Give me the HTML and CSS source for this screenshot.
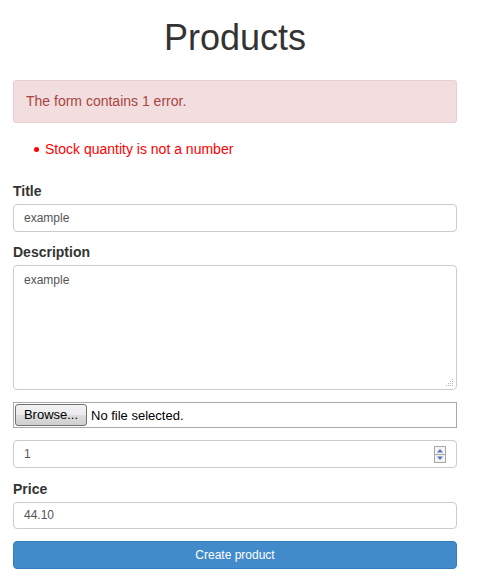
FILE: index.html
```html
<!DOCTYPE html>
<html>
<head>
<meta charset="utf-8">
<link rel="stylesheet" href="styles.css">
</head>
<body>
<div class="container">
  <h1 class="page-title">Products</h1>
  <div class="alert">The form contains 1 error.</div>
  <ul class="errors">
    <li>Stock quantity is not a number</li>
  </ul>
  <form class="form">
    <div class="group group-tight">
      <label class="label">Title</label>
      <div class="input">example</div>
    </div>
    <div class="group">
      <label class="label">Description</label>
      <div class="input textarea">example
        <svg class="grip" width="8" height="8" viewBox="0 0 8 8"><g fill="#b8b8b8"><rect x="6" y="0" width="1" height="1"/><rect x="4" y="2" width="1" height="1"/><rect x="6" y="2" width="1" height="1"/><rect x="2" y="4" width="1" height="1"/><rect x="4" y="4" width="1" height="1"/><rect x="6" y="4" width="1" height="1"/><rect x="0" y="6" width="1" height="1"/><rect x="2" y="6" width="1" height="1"/><rect x="4" y="6" width="1" height="1"/><rect x="6" y="6" width="1" height="1"/></g></svg>
      </div>
    </div>
    <div class="group">
      <div class="file">
        <span class="browse">Browse...</span>
        <span class="file-text">No file selected.</span>
      </div>
    </div>
    <div class="group">
      <div class="input number">
        <span>1</span>
        <svg class="spin" width="12" height="17" viewBox="0 0 12 17">
          <rect x="0.5" y="0.5" width="11" height="16" fill="#f4f4f4" stroke="#a8a8a8"/>
          <line x1="1" y1="8.5" x2="11" y2="8.5" stroke="#a8a8a8"/>
          <polygon points="3,6.5 9,6.5 6,3" fill="#5a6ec0"/>
          <polygon points="3,10.5 9,10.5 6,14" fill="#5a6ec0"/>
        </svg>
      </div>
    </div>
    <div class="group">
      <label class="label">Price</label>
      <div class="input input-short">44.10</div>
    </div>
    <div class="group">
      <div class="btn">Create product</div>
    </div>
  </form>
</div>
</body>
</html>
```

FILE: styles.css
```css
html, body {
  margin: 0;
  padding: 0;
  background: #fff;
}
body {
  font-family: "Liberation Sans", Arial, sans-serif;
  color: #333;
  font-size: 14px;
}
.container {
  width: 444px;
  margin-left: 13px;
}
.page-title {
  margin: 0;
  padding-top: 18px;
  height: 80px;
  box-sizing: border-box;
  text-align: center;
  font-size: 36px;
  font-weight: normal;
  line-height: 40px;
  color: #333;
}
.alert {
  height: 43px;
  box-sizing: border-box;
  background: #f2dede;
  border: 1px solid #ebccd1;
  border-radius: 3px;
  color: #a94442;
  padding: 10px 12px;
  line-height: 20px;
}
.errors {
  margin: 0;
  padding: 16px 0 0 32px;
  height: 59px;
  box-sizing: border-box;
  color: #ff0000;
  line-height: 20px;
  list-style: none;
}
.errors li {
  position: relative;
}
.errors li::before {
  content: "";
  position: absolute;
  left: -11px;
  top: 8px;
  width: 5px;
  height: 5px;
  border-radius: 50%;
  background: #ff0000;
}
.form {
  display: flex;
  flex-direction: column;
}
.group {
  display: flex;
  flex-direction: column;
  margin-bottom: 12px;
}
.group-tight {
  margin-bottom: 11px;
}
.label {
  font-weight: bold;
  line-height: 18px;
  margin-bottom: 4px;
  color: #333;
}
.input {
  height: 28px;
  box-sizing: border-box;
  border: 1px solid #ccc;
  border-radius: 4px;
  padding: 0 10px;
  font-size: 12px;
  line-height: 26px;
  color: #555;
  background: #fff;
}
.input-short {
  height: 27px;
  line-height: 25px;
}
.textarea {
  position: relative;
  height: 125px;
  line-height: 16px;
  padding-top: 6px;
}
.grip {
  position: absolute;
  right: 2px;
  bottom: 2px;
}
.file {
  height: 26px;
  box-sizing: border-box;
  border: 1px solid #a9a9a9;
  display: flex;
  align-items: center;
  padding-left: 1px;
  gap: 4px;
}
.browse {
  height: 22px;
  box-sizing: border-box;
  width: 72px;
  border: 1px solid #707070;
  border-radius: 3px;
  background: linear-gradient(#f2f2f2, #ebebeb 50%, #dddddd 51%, #cfcfcf);
  font-size: 13px;
  line-height: 20px;
  text-align: center;
  color: #000;
}
.file-text {
  font-size: 13px;
  color: #000;
}
.number {
  display: flex;
  align-items: center;
  justify-content: space-between;
  padding-right: 10px;
}
.spin {
  display: block;
}
.btn {
  height: 28px;
  box-sizing: border-box;
  background: #428bca;
  border: 1px solid #357ebd;
  border-radius: 4px;
  color: #fff;
  text-align: center;
  font-size: 12px;
  line-height: 26px;
}
```
